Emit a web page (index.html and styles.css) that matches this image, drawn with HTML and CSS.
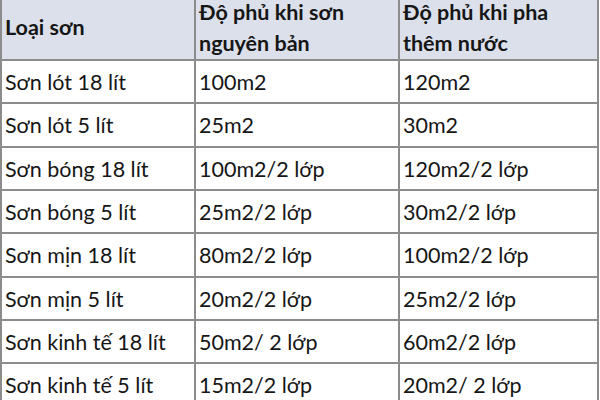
FILE: index.html
```
<!DOCTYPE html>
<html lang="vi">
<head>
<meta charset="utf-8">
<link rel="stylesheet" href="styles.css">
</head>
<body>
<div class="paint" role="table">
  <div class="cell head" role="columnheader">Loại sơn</div>
  <div class="cell head" role="columnheader">Độ phủ khi sơn nguyên bản</div>
  <div class="cell head" role="columnheader">Độ phủ khi pha thêm nước</div>

  <div class="cell">Sơn lót 18 lít</div><div class="cell">100m2</div><div class="cell">120m2</div>
  <div class="cell">Sơn lót 5 lít</div><div class="cell">25m2</div><div class="cell">30m2</div>
  <div class="cell">Sơn bóng 18 lít</div><div class="cell">100m2/2 lớp</div><div class="cell">120m2/2 lớp</div>
  <div class="cell">Sơn bóng 5 lít</div><div class="cell">25m2/2 lớp</div><div class="cell">30m2/2 lớp</div>
  <div class="cell">Sơn mịn 18 lít</div><div class="cell">80m2/2 lớp</div><div class="cell">100m2/2 lớp</div>
  <div class="cell">Sơn mịn 5 lít</div><div class="cell">20m2/2 lớp</div><div class="cell">25m2/2 lớp</div>
  <div class="cell">Sơn kinh tế 18 lít</div><div class="cell">50m2/ 2 lớp</div><div class="cell">60m2/2 lớp</div>
  <div class="cell">Sơn kinh tế 5 lít</div><div class="cell">15m2/2 lớp</div><div class="cell">20m2/ 2 lớp</div>
</div>
</body>
</html>
```
FILE: styles.css
```
html, body {
  margin: 0;
  padding: 0;
  background: #ffffff;
  overflow: hidden;
}
.paint {
  display: grid;
  grid-template-columns: 192px 202px 197px;
  grid-template-rows: 63px repeat(8, 41.33px);
  gap: 2px;
  padding: 0 2px 2px 2px;
  width: 599px;
  box-sizing: border-box;
  margin-top: -4px;
  background: #8c8c8c;
  font-family: Lato, "Liberation Sans", sans-serif;
  font-size: 21.5px;
  color: #161616;
}
.cell {
  background: #ffffff;
  padding: 1px 4px 0 3px;
  line-height: 41px;
  white-space: nowrap;
}
.head {
  background: #dbe0ea;
  font-weight: bold;
  white-space: normal;
  line-height: 31px;
  padding: 0 4px 0 3px;
  display: flex;
  align-items: center;
}
```
